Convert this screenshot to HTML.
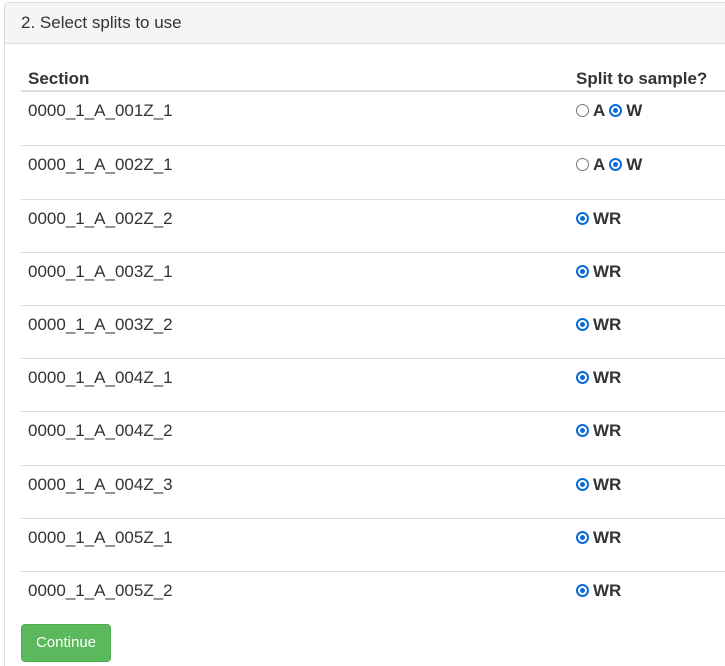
<!DOCTYPE html>
<html><head><style>
html,body{margin:0;height:666px;overflow:hidden;}
body{background:#fff;font-family:"Liberation Sans",Arial,sans-serif;color:#333;font-size:17px;position:relative;}
.panel{position:absolute;left:4px;top:2px;width:740px;height:664px;border:1px solid #ddd;border-bottom:none;border-radius:4px 4px 0 0;}
.hd{height:40px;background:#f5f5f5;border-bottom:1px solid #ddd;padding-left:16px;line-height:40px;font-size:17px;}
.th{position:absolute;top:69px;font-weight:bold;line-height:20px;}
.hl{position:absolute;left:21px;width:720px;top:90px;height:2px;background:#ddd;}
.row{position:absolute;left:21px;width:720px;height:53px;}
.row .a{position:absolute;left:7px;top:9px;line-height:20px;}
.row .b{position:absolute;left:555px;top:9px;line-height:20px;}
.row.l{border-top:1px solid #ddd;}
.r{display:inline-block;border-radius:50%;border:1px solid #777;vertical-align:-1px;box-sizing:border-box;width:13px;height:13px;}
.r.on{border:2px solid #0b6bd6;position:relative;}
.r.on:after{content:"";position:absolute;left:2px;top:2px;width:5px;height:5px;border-radius:50%;background:#0b6bd6;}
b{font-weight:bold;margin-left:4px;margin-right:4px;}
.btn{position:absolute;left:21px;top:624px;width:88px;height:36px;background:#5cb85c;border:1px solid #4cae4c;border-radius:4px;color:#fff;font-size:15px;line-height:36px;text-align:center;}
</style></head><body>
<div class="panel"><div class="hd">2. Select splits to use</div></div>
<div class="th" style="left:28px">Section</div>
<div class="th" style="left:576px">Split to sample?</div>
<div class="hl"></div>
<div class="row" style="top:92px"><span class="a">0000_1_A_001Z_1</span><span class="b"><span class="r"></span><b>A</b><span class="r on"></span><b>W</b></span></div>
<div class="row l" style="top:145px"><span class="a">0000_1_A_002Z_1</span><span class="b"><span class="r"></span><b>A</b><span class="r on"></span><b>W</b></span></div>
<div class="row l" style="top:199px"><span class="a">0000_1_A_002Z_2</span><span class="b"><span class="r on"></span><b>WR</b></span></div>
<div class="row l" style="top:252px"><span class="a">0000_1_A_003Z_1</span><span class="b"><span class="r on"></span><b>WR</b></span></div>
<div class="row l" style="top:305px"><span class="a">0000_1_A_003Z_2</span><span class="b"><span class="r on"></span><b>WR</b></span></div>
<div class="row l" style="top:358px"><span class="a">0000_1_A_004Z_1</span><span class="b"><span class="r on"></span><b>WR</b></span></div>
<div class="row l" style="top:411px"><span class="a">0000_1_A_004Z_2</span><span class="b"><span class="r on"></span><b>WR</b></span></div>
<div class="row l" style="top:465px"><span class="a">0000_1_A_004Z_3</span><span class="b"><span class="r on"></span><b>WR</b></span></div>
<div class="row l" style="top:518px"><span class="a">0000_1_A_005Z_1</span><span class="b"><span class="r on"></span><b>WR</b></span></div>
<div class="row l" style="top:571px"><span class="a">0000_1_A_005Z_2</span><span class="b"><span class="r on"></span><b>WR</b></span></div>
<div class="btn">Continue</div>
</body></html>
